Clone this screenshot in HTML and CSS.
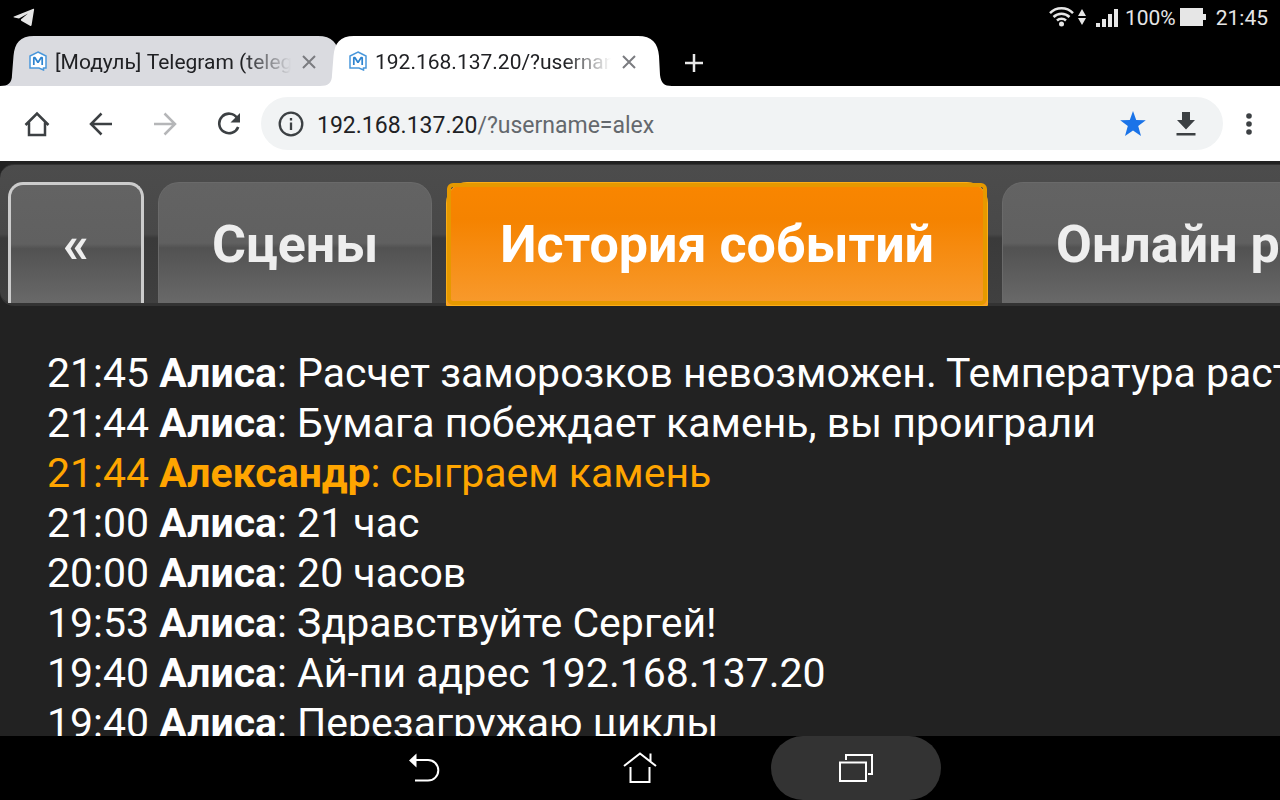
FILE: index.html
```html
<!DOCTYPE html>
<html lang="ru">
<head>
  <meta charset="UTF-8">
  <meta name="viewport" content="width=device-width, initial-scale=1.0">
  <title>История событий</title>
  <link rel="stylesheet" href="styles.css">
</head>
<body>

  <div class="status-bar">
    <svg class="telegram" width="22" height="20" viewBox="0 0 22 20"><path d="M1 8.400 20.400.8c.5-.2.8.2.7.8L18.600 17c-.2 1-.9 1.200-1.600.7L8.200 12.800l-.4-1.300 7.200-6L6 10.600 1.200 9.500c-.9-.3-.9-.8-.2-1.100z" fill="#e6e6e6"/></svg>
    <div class="status-right">
      <svg class="wifi" width="38" height="22" viewBox="0 0 38 22">
        <g fill="none" stroke="#e6e6e6" stroke-width="2.5">
          <path d="M1 8.2a16 16 0 0 1 23 0M4.500 12a11.500 11.500 0 0 1 16 0M8 15.500a6.500 6.500 0 0 1 9 0"/>
        </g>
        <circle cx="12.5" cy="19" r="2.500" fill="#e6e6e6"/>
        <path d="m33 4 4 7h-8zM33 20l4-7h-8z" fill="#e6e6e6"/>
      </svg>
      <svg class="signal" width="24" height="20" viewBox="0 0 24 20"><path d="M1 15h4v4H1zM7 11h4v8H7zM13 6h4v13h-4zM19 1h4v18h-4z" fill="#e6e6e6"/></svg>
      <span>100%</span>
      <svg class="battery" width="26" height="18" viewBox="0 0 26 18"><path d="M0 0h23v6h3v6h-3v6H0z" fill="#e6e6e6"/></svg>
      <span>21:45</span>
    </div>
  </div>

  <div class="tab-strip">
    <div class="tab">
      <svg class="tab-shape" viewBox="0 0 352 50" preserveAspectRatio="none"><path d="M0 50c8 0 12-3 12-11l1.500-19C14.500 7 20 0 34 0h284c14 0 20 7 21 20l1 19c1 8 4 11 12 11z" fill="#dadbe0"/></svg>
      <svg class="favicon" width="18" height="20" viewBox="0 0 18 20"><path d="M9 1 17 5v12h-2.500v2L10 17H1V5z" fill="#fff" stroke="#4a98db" stroke-width="1.500"/><path d="M4.800 14V6.500h1l3.200 5 3.200-5h1V14" fill="none" stroke="#2f84cf" stroke-width="1.700" stroke-linejoin="bevel"/></svg>
      <span class="tab-title">[Модуль] Telegram (telegram)</span>
      <button class="tab-close" aria-label="Закрыть вкладку"><svg width="14" height="14" viewBox="0 0 14 14"><path d="m1 1 12 12M13 1 1 13" stroke="#7b7c80" stroke-width="2"/></svg></button>
    </div>
    <div class="tab active">
      <svg class="tab-shape" viewBox="0 0 352 50" preserveAspectRatio="none"><path d="M0 50c8 0 12-3 12-11l1.500-19C14.500 7 20 0 34 0h284c14 0 20 7 21 20l1 19c1 8 4 11 12 11z" fill="#fff"/></svg>
      <svg class="favicon" width="18" height="20" viewBox="0 0 18 20"><path d="M9 1 17 5v12h-2.500v2L10 17H1V5z" fill="#fff" stroke="#4a98db" stroke-width="1.500"/><path d="M4.800 14V6.500h1l3.200 5 3.200-5h1V14" fill="none" stroke="#2f84cf" stroke-width="1.700" stroke-linejoin="bevel"/></svg>
      <span class="tab-title">192.168.137.20/?username=alex</span>
      <button class="tab-close" aria-label="Закрыть вкладку"><svg width="14" height="14" viewBox="0 0 14 14"><path d="m1 1 12 12M13 1 1 13" stroke="#7b7c80" stroke-width="2"/></svg></button>
    </div>
    <button class="tab-new" aria-label="Новая вкладка"><svg width="20" height="20" viewBox="0 0 20 20"><path d="M10 1v18M1 10h18" stroke="#e8e8e8" stroke-width="2.500"/></svg></button>
  </div>

  <div class="toolbar">
    <button class="tool" aria-label="Домой"><svg width="26" height="26" viewBox="0 0 26 26"><path d="M1.500 14 13 2.500 24.500 14M5 11.500v12.500h16V11.500" fill="none" stroke="#3c4043" stroke-width="2.500"/></svg></button>
    <button class="tool" aria-label="Назад"><svg width="24" height="24" viewBox="0 0 24 24"><path d="M23 12H3M12.500 1.500 2 12l10.500 10.500" fill="none" stroke="#3c4043" stroke-width="2.500"/></svg></button>
    <button class="tool" aria-label="Вперед"><svg width="24" height="24" viewBox="0 0 24 24"><path d="M1 12h20M11.500 1.500 22 12 11.500 22.500" fill="none" stroke="#b5b6b8" stroke-width="2.500"/></svg></button>
    <button class="tool" aria-label="Обновить"><svg width="24" height="24" viewBox="0 0 24 24"><path d="M20.200 6A9.800 9.800 0 1 0 21.200 15" fill="none" stroke="#3c4043" stroke-width="2.600"/><path d="M23 1v9.500h-9.500z" fill="#3c4043"/></svg></button>
    <div class="address">
      <svg width="26" height="26" viewBox="0 0 26 26"><circle cx="13" cy="13" r="11.300" fill="none" stroke="#3c4043" stroke-width="2.300"/><path d="M13 11.500v7.500M13 7v2.500" stroke="#3c4043" stroke-width="2.300"/></svg>
      <div class="url">192.168.137.20<span>/?username=alex</span></div>
      <button class="address-btn" aria-label="Закладка"><svg width="26" height="26" viewBox="0 0 26 26"><path d="m13 0 3.200 9 9.600.2-7.600 5.900L21 25l-8-5.600L5 25l2.800-9.900L.2 9.200 9.800 9z" fill="#1a73e8"/></svg></button>
      <button class="address-btn" aria-label="Скачать"><svg width="20" height="24" viewBox="0 0 20 24"><path d="M6 0h8v8h5l-9 9.500L1 8h5zM.5 21h19v2.500H.5z" fill="#3c4043"/></svg></button>
    </div>
    <button class="menu" aria-label="Меню"><svg width="6" height="22" viewBox="0 0 6 22"><g fill="#3c4043"><circle cx="3" cy="3" r="2.800"/><circle cx="3" cy="11" r="2.800"/><circle cx="3" cy="19" r="2.800"/></g></svg></button>
  </div>

  <main class="page">
    <nav class="page-tabs">
      <a class="page-tab back" href="#">«</a>
      <a class="page-tab" href="#">Сцены</a>
      <a class="page-tab selected" href="#">История событий</a>
      <a class="page-tab" href="#">Онлайн радио</a>
    </nav>
    <div class="events">
      <p>21:45 <b>Алиса</b>: Расчет заморозков невозможен. Температура растет</p>
      <p>21:44 <b>Алиса</b>: Бумага побеждает камень, вы проиграли</p>
      <p class="own">21:44 <b>Александр</b>: сыграем камень</p>
      <p>21:00 <b>Алиса</b>: 21 час</p>
      <p>20:00 <b>Алиса</b>: 20 часов</p>
      <p>19:53 <b>Алиса</b>: Здравствуйте Сергей!</p>
      <p>19:40 <b>Алиса</b>: Ай-пи адрес 192.168.137.20</p>
      <p>19:40 <b>Алиса</b>: Перезагружаю циклы</p>
    </div>
  </main>

  <div class="system-bar">
    <button aria-label="Назад"><svg width="32" height="32" viewBox="0 0 32 32"><path d="M7 8h13a10.300 10.300 0 0 1 0 20.600H7" fill="none" stroke="#fff" stroke-width="2"/><path d="M1 8.500 8.500 1.500v14z" fill="#fff"/></svg></button>
    <button aria-label="Домой"><svg width="34" height="34" viewBox="0 0 34 34"><path d="M1 15 17 2.500 33 15M27.500 10V2.500M7.500 16v15h19V16" fill="none" stroke="#fff" stroke-width="2"/></svg></button>
    <button class="pressed" aria-label="Недавние"><svg width="36" height="30" viewBox="0 0 36 30"><path d="M2 9.500h26v18.500H2zM8 7V2h26v19h-4" fill="none" stroke="#fff" stroke-width="2"/></svg></button>
  </div>

</body>
</html>
```
FILE: styles.css
```css
* {
  box-sizing: border-box;
}

body {
  margin: 0;
  height: 100vh;
  display: flex;
  flex-direction: column;
  overflow: hidden;
  background-color: #000;
  font-family: Roboto, sans-serif;
}

button {
  display: flex;
  align-items: center;
  justify-content: center;
  padding: 0;
  border: none;
  background: none;
}

svg {
  display: block;
  flex: none;
}

.status-bar {
  display: flex;
  justify-content: space-between;
  align-items: center;
  height: 36px;
  padding: 0 12px 0 13px;
  color: #e6e6e6;
  font-size: 21px;
}

.status-right {
  display: flex;
  align-items: center;
}

.wifi {
  margin-right: 8px;
  margin-bottom: 4px;
}

.signal {
  margin-right: 6px;
}

.battery {
  margin: 0 10px 2px 4px;
}

.tab-strip {
  display: flex;
  height: 50px;
}

.tab {
  position: relative;
  display: flex;
  align-items: center;
  width: 352px;
  padding: 2px 36px 0 29px;
}

.tab.active {
  margin-left: -32px;
}

.tab-shape {
  position: absolute;
  inset: 0;
  width: 100%;
  height: 100%;
}

.favicon,
.tab-title,
.tab-close {
  position: relative;
}

.favicon {
  margin-bottom: 3px;
}

.tab-title {
  flex: 1;
  margin: 0 11px 0 8px;
  overflow: hidden;
  white-space: nowrap;
  font-size: 21px;
  color: #202124;
  -webkit-mask-image: linear-gradient(to right, #000 80%, transparent);
  mask-image: linear-gradient(to right, #000 80%, transparent);
}

.tab-new {
  width: 44px;
  padding-top: 3px;
}

.toolbar {
  display: flex;
  align-items: center;
  flex: none;
  height: 75px;
  padding: 0 7px 0 5px;
  background-color: #fff;
}

.tool {
  width: 64px;
  height: 64px;
}

.address {
  flex: 1;
  display: flex;
  align-items: center;
  height: 53px;
  margin-right: 2px;
  padding: 0 27px 0 17px;
  border-radius: 27px;
  background-color: #f1f3f4;
}

.url {
  flex: 1;
  margin-left: 13px;
  padding-top: 3px;
  font-size: 23px;
  color: #202124;
}

.url span {
  color: #64686d;
}

.address-btn {
  margin-left: 30px;
}

.menu {
  width: 48px;
  height: 48px;
}

.page {
  flex: 1;
  min-height: 0;
  overflow: hidden;
  padding-top: 3px;
  background-color: #222;
}

.page-tabs {
  display: flex;
  gap: 14px;
  width: max-content;
  height: 142px;
  padding: 17px 8px 0;
  border: solid #333;
  border-width: 1px 0 3px;
  border-radius: 14px;
  background: linear-gradient(#4c4c4c, #484848 50%, #3a3a3a 53%, #404040);
}

.page-tab {
  height: 121px;
  padding: 0 53px;
  border: 1px solid #6a6a6a;
  border-bottom: none;
  border-radius: 21px 21px 0 0;
  background: linear-gradient(#636363, #606060 50%, #525252 54%, #696969);
  color: #eee;
  font-size: 52px;
  font-weight: bold;
  line-height: 123px;
  text-decoration: none;
  white-space: nowrap;
}

.page-tab.back {
  padding: 0 52px;
  border: 3px solid #ccc;
  border-bottom: none;
  border-radius: 15px 15px 0 0;
  line-height: 119px;
}

.page-tab.selected {
  position: relative;
  height: 124px;
  border: 1px solid #fbad18;
  background: linear-gradient(#f98600, #f58300 30%, #f89a2d);
  color: #fff;
}

/* focus ring, squarer than the tab */
.page-tab.selected::after {
  content: "";
  position: absolute;
  inset: 0;
  border: 4px solid #e69900;
  border-radius: 6px;
}

.events {
  padding: 42px 47px;
  color: #fff;
  font-size: 41px;
  line-height: 50px;
  white-space: nowrap;
}

.events p {
  margin: 0;
}

.events .own {
  color: #ffa500;
}

.system-bar {
  display: flex;
  justify-content: center;
  flex: none;
  gap: 46px;
  height: 64px;
}

.system-bar button {
  width: 170px;
  border-radius: 32px;
}

.system-bar .pressed {
  background-color: #333;
}
```
